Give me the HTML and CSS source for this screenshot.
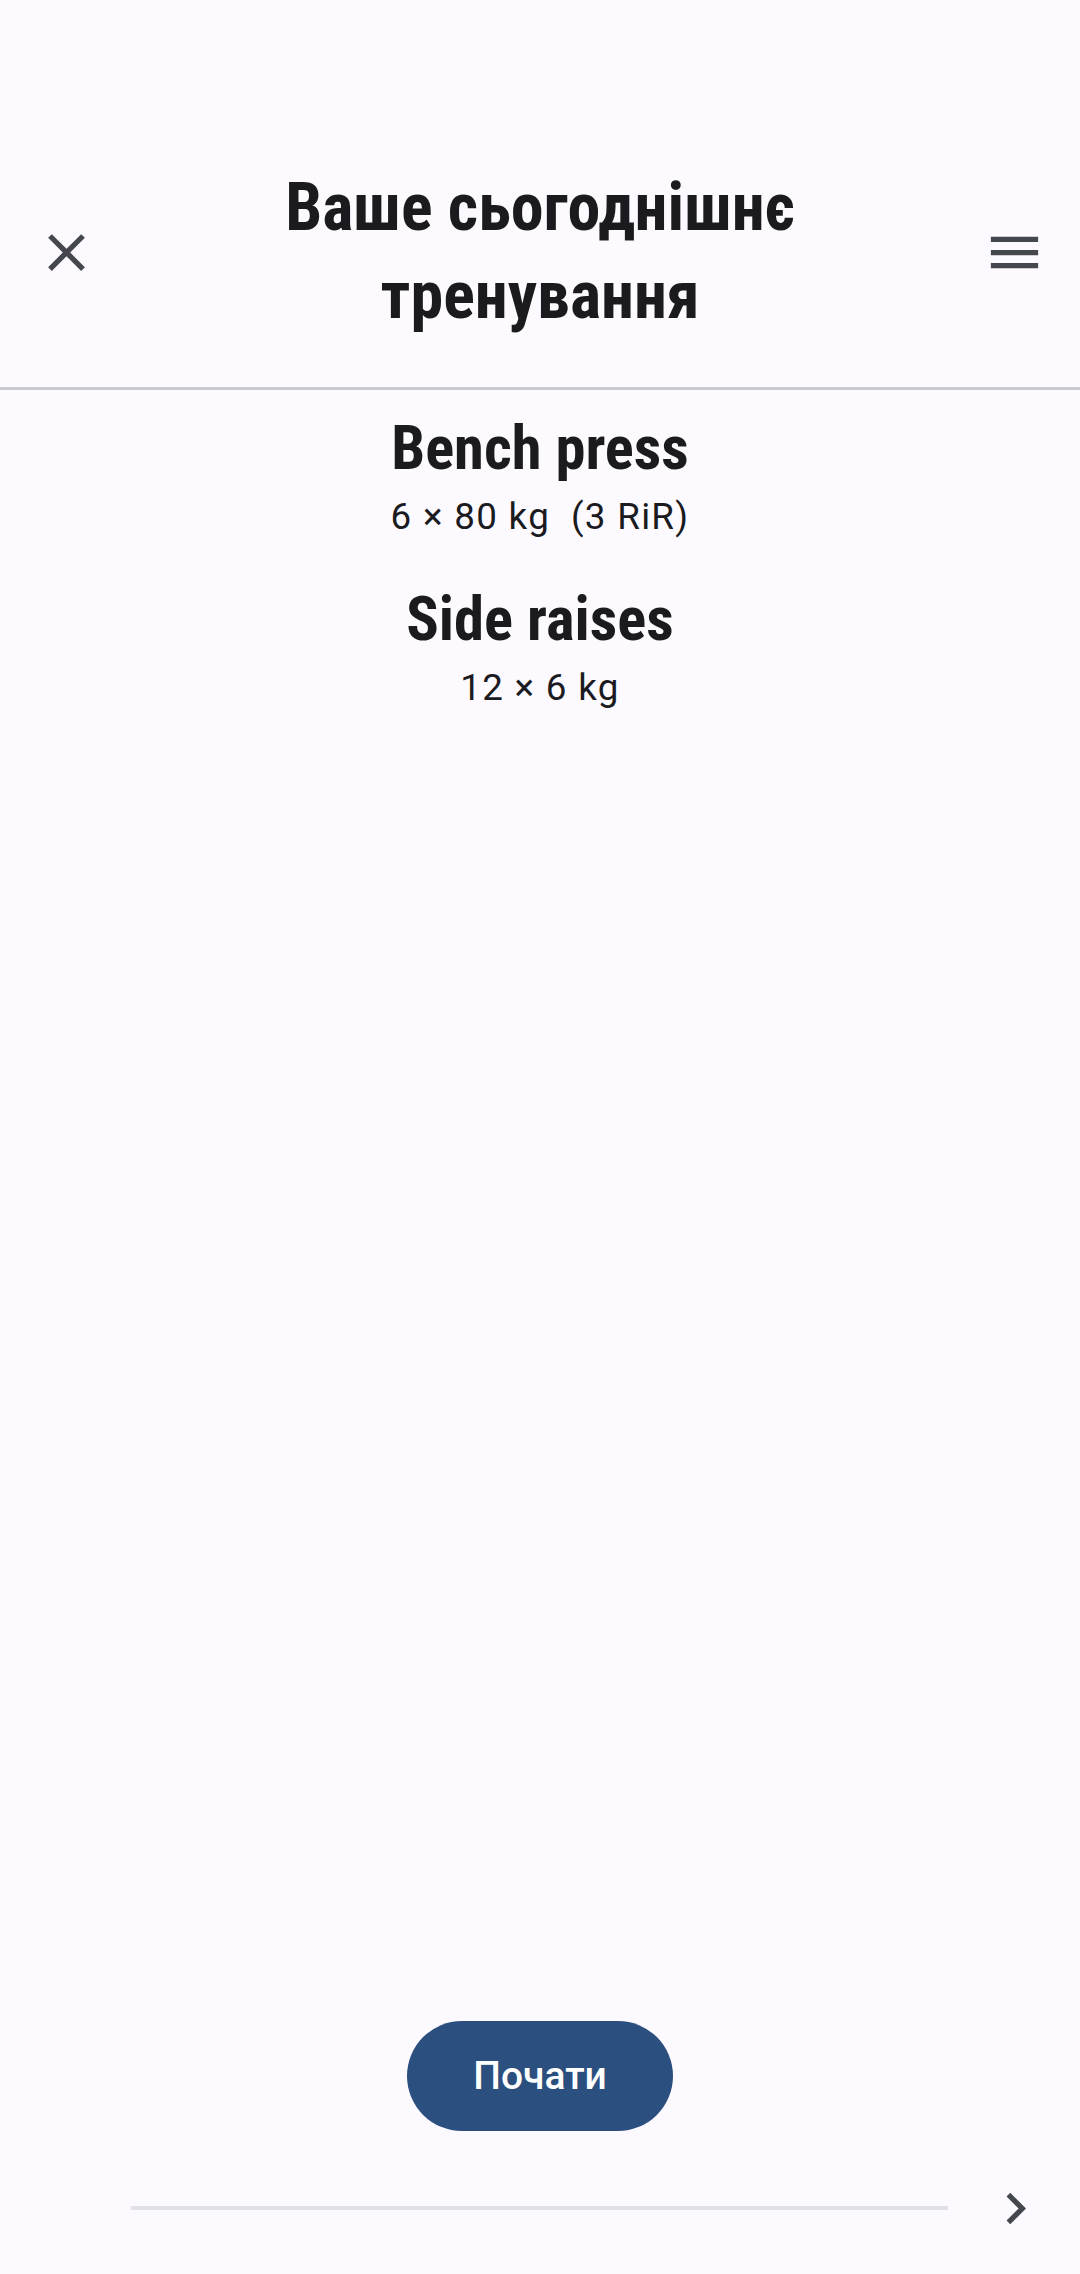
FILE: index.html
```html
<!DOCTYPE html>
<html lang="uk">
<head>
<meta charset="utf-8">
<title>Ваше сьогоднішнє тренування</title>
<link rel="stylesheet" href="styles.css">
</head>
<body>
<div class="screen">
  <header class="topbar">
    <button class="icon-btn" aria-label="Закрити">
      <svg viewBox="0 0 24 24" width="63" height="63"><path d="M19 6.41 17.59 5 12 10.59 6.41 5 5 6.41 10.59 12 5 17.59 6.41 19 12 13.41 17.59 19 19 17.59 13.41 12z" fill="#44474e"/></svg>
    </button>
    <h1 class="title">Ваше сьогоднішнє<br>тренування</h1>
    <button class="icon-btn" aria-label="Меню">
      <svg viewBox="0 0 24 24" width="63" height="63"><path d="M3 18h18v-2H3v2zm0-5h18v-2H3v2zm0-7v2h18V6H3z" fill="#44474e"/></svg>
    </button>
  </header>

  <main class="list">
    <section class="exercise">
      <h2 class="ex-name">Bench press</h2>
      <p class="ex-detail">6 × 80 kg&nbsp; (3 RiR)</p>
    </section>
    <section class="exercise">
      <h2 class="ex-name">Side raises</h2>
      <p class="ex-detail">12 × 6 kg</p>
    </section>
  </main>

  <div class="actions">
    <button class="start-btn">Почати</button>
  </div>

  <footer class="bottombar">
    <div class="progress"></div>
    <button class="icon-btn" aria-label="Далі">
      <svg viewBox="0 0 24 24" width="63" height="63"><path d="M10 6 8.59 7.41 13.17 12l-4.58 4.59L10 18l6-6z" fill="#44474e"/></svg>
    </button>
  </footer>
</div>
</body>
</html>
```

FILE: styles.css
```css
* { box-sizing: border-box; }

html, body {
  margin: 0;
  padding: 0;
  background: #fcfaff;
}

body {
  font-family: Roboto, "Noto Sans", sans-serif;
  color: #1b1b1f;
}

.screen {
  width: 1080px;
  min-height: 2274px;
  display: flex;
  flex-direction: column;
}

.icon-btn {
  width: 63px;
  height: 63px;
  padding: 0;
  margin: 0;
  border: 0;
  background: none;
  display: flex;
  align-items: center;
  justify-content: center;
}

.icon-btn svg { display: block; }

.topbar {
  display: grid;
  grid-template-columns: 63px 1fr 63px;
  align-items: center;
  padding: 164px 34.5px 47px;
  border-bottom: 3px solid #cac8d0;
}

.title {
  margin: 0;
  text-align: center;
  font-family: "Roboto Condensed", "Liberation Sans Narrow", "DejaVu Sans Condensed", sans-serif;
  font-stretch: condensed;
  font-weight: 700;
  font-size: 66px;
  line-height: 88px;
}

.list {
  flex: 1;
  display: flex;
  flex-direction: column;
  align-items: center;
  gap: 36px;
  padding-top: 22px;
}

.exercise {
  display: flex;
  flex-direction: column;
  align-items: center;
}

.ex-name {
  margin: 0;
  font-family: "Roboto Condensed", "Liberation Sans Narrow", "DejaVu Sans Condensed", sans-serif;
  font-stretch: condensed;
  font-weight: 700;
  font-size: 60.5px;
  line-height: 74px;
}

.ex-detail {
  margin: 0;
  font-size: 36.75px;
  letter-spacing: 1.3px;
  line-height: 61px;
  font-weight: 400;
  color: #1b1b1f;
}

.actions {
  display: flex;
  justify-content: center;
  margin-bottom: 45px;
}

.start-btn {
  width: 266px;
  height: 110px;
  border: 0;
  border-radius: 55px;
  background: #2b4f7e;
  color: #ffffff;
  font-family: Roboto, sans-serif;
  font-weight: 500;
  font-size: 39px;
  padding: 0;
}

.bottombar {
  display: flex;
  align-items: center;
  height: 64px;
  padding: 0 33.5px 0 131px;
  margin-bottom: 34px;
  gap: 35.5px;
}

.progress {
  flex: 1;
  height: 4px;
  background: #e1e1ea;
}
```
